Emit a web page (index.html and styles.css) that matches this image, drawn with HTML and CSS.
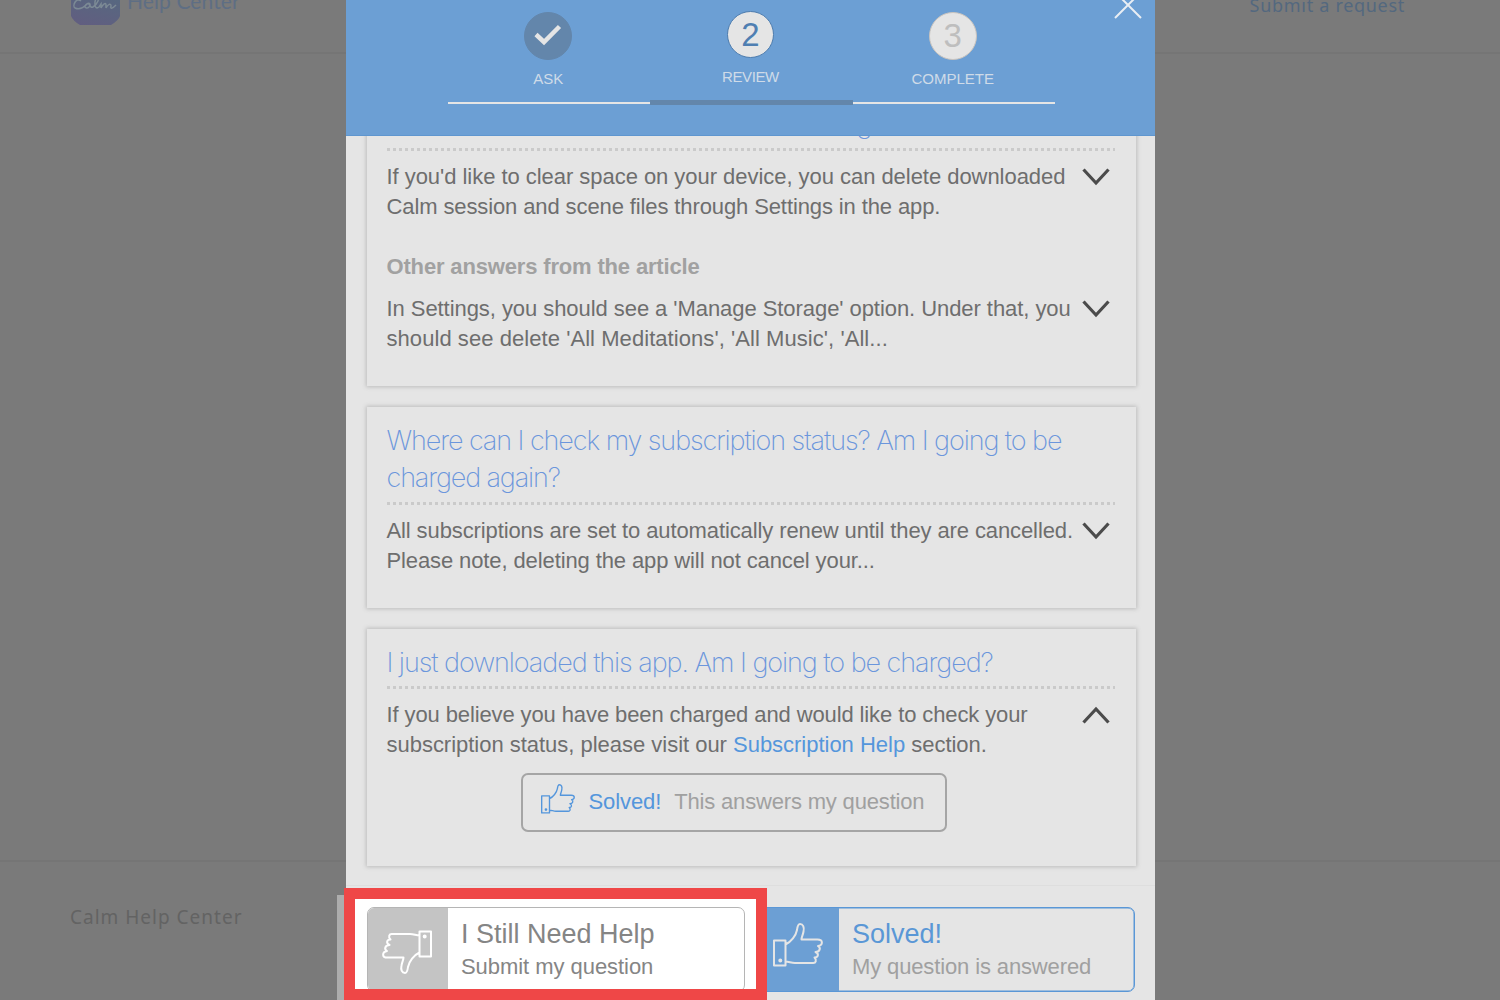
FILE: index.html
```html
<!DOCTYPE html>
<html lang="en">
<head>
<meta charset="utf-8">
<title>Calm Help Center</title>
<link rel="stylesheet" href="styles.css">
</head>
<body>
<svg class="defs" width="0" height="0" aria-hidden="true">
  <symbol id="thumb" viewBox="0 0 50 44">
    <path d="M1 17.500h11.500v25h-11.500zM12.500 21.500C18 19 23 12.500 24 7C24.500 3 25 1 27 1C30 1 31.500 4 30.500 8.500C30 12 28.500 14 28.500 16.500H44.500C50.500 16.500 50 22 45 23C48.500 25 46.500 29 42.500 29C46.500 31 45 34.500 41.500 34.500C44 37 43 40.500 39.500 40H22C18 40 16 38.500 12.500 38.500"/>
    <circle cx="7.300" cy="37.500" r="1"/>
  </symbol>
  <symbol id="chevron" viewBox="0 0 28 18"><path d="M1.500 1.500L14 15L26.500 1.500"/></symbol>
</svg>
<div class="page">
  <header class="site-header">
    <div class="brand">
      <svg class="logo" width="49" height="48" viewBox="0 0 49 48">
        <defs><linearGradient id="lg" x1="0" y1="1" x2=".3" y2="0"><stop offset="0" stop-color="#625d80"/><stop offset="1" stop-color="#536b80"/></linearGradient></defs>
        <path d="M0 9L9 0H40L49 9V39Q48 43 40 48H9Q2 44 0 39Z" fill="url(#lg)"/>
        <path d="M10 24C5 20 1 29 4 31C8 33 12 31 15 28C17 25 21 26 18 30C15 33 12 29 16 27C19 25 19 32 22 30C27 27 29 20 26 21C23 23 23 34 28 30L30 27V31C32 27 35 25 35 28V31C37 27 40 26 40 29C39 33 42 31 45 28" fill="none" stroke="#7c8a95" stroke-width="1.500"/>
      </svg>
      <span class="brand-name">Help Center</span>
    </div>
    <a class="request">Submit a request</a>
  </header>
  <main class="site-main"></main>
  <footer class="site-footer">Calm Help Center</footer>
</div>

<section class="modal">
  <header class="modal-head">
    <ol class="steps">
      <li class="step done"><span class="dot"><svg width="28" height="22" viewBox="0 0 28 22"><path d="M2 10.500L10 18L25.500 2.500"/></svg></span><span class="label">ASK</span></li>
      <li class="step active"><span class="dot">2</span><span class="label">REVIEW</span></li>
      <li class="step"><span class="dot">3</span><span class="label">COMPLETE</span></li>
    </ol>
    <svg class="close" width="28" height="28" viewBox="0 0 28 28"><path d="M1 1L27 27M27 1L1 27"/></svg>
  </header>
  <div class="answers">
    <article class="card">
      <h2 class="title clipped"><span>g</span></h2>
      <div class="dots"></div>
      <div class="row"><p><span class="t1">If you'd like to clear space on your device, you can delete downloaded</span><br><span class="t2">Calm session and scene files through Settings in the app.</span></p><svg class="chev"><use href="#chevron"/></svg></div>
      <h3 class="other">Other answers from the article</h3>
      <div class="row"><p><span class="t3">In Settings, you should see a 'Manage Storage' option. Under that, you</span><br><span class="t4">should see delete 'All Meditations', 'All Music', 'All...</span></p><svg class="chev"><use href="#chevron"/></svg></div>
    </article>
    <article class="card">
      <h2 class="title"><span class="h1">Where can I check my subscription status? Am I going to be</span><br><span class="h2">charged again?</span></h2>
      <div class="dots"></div>
      <div class="row"><p><span class="t5">All subscriptions are set to automatically renew until they are cancelled.</span><br><span class="t6">Please note, deleting the app will not cancel your...</span></p><svg class="chev"><use href="#chevron"/></svg></div>
    </article>
    <article class="card last">
      <h2 class="title"><span class="h3">I just downloaded this app. Am I going to be charged?</span></h2>
      <div class="dots"></div>
      <div class="row"><p><span class="t7">If you believe you have been charged and would like to check your</span><br><span class="t8">subscription status, please visit our <a>Subscription Help</a> section.</span></p><svg class="chev up"><use href="#chevron"/></svg></div>
      <div class="solve"><svg class="thumb small"><use href="#thumb"/></svg><span class="solve-a">Solved!</span><span class="solve-b">This answers my question</span></div>
    </article>
  </div>
  <footer class="modal-foot">
    <div class="action solved">
      <span class="tile"><svg class="thumb"><use href="#thumb"/></svg></span>
      <span class="text"><strong>Solved!</strong><em>My question is answered</em></span>
    </div>
  </footer>
</section>

<div class="edge"></div>
<div class="callout">
  <div class="action help">
    <span class="tile"><svg class="thumb down"><use href="#thumb"/></svg></span>
    <span class="text"><strong>I Still Need Help</strong><em>Submit my question</em></span>
  </div>
</div>
</body>
</html>
```
FILE: styles.css
```css
* { box-sizing: border-box; }
body { margin: 0; width: 1500px; height: 1000px; overflow: hidden; position: relative; background: #7a7a7a; font-family: "Liberation Sans", Arial, sans-serif; }
h2, h3, p, ol { margin: 0; padding: 0; font-weight: 400; }
.defs { position: absolute; }

.page { height: 1000px; display: flex; flex-direction: column; }
.site-header { height: 54px; flex: none; border-bottom: 2px solid #757575; padding: 0 95px 0 71px; display: flex; justify-content: space-between; align-items: flex-start; }
.brand { display: flex; gap: 7px; margin-top: -23px; }
.brand-name { font: 21px/30px Lato, sans-serif; color: #5e6e84; margin-top: 9px; letter-spacing: .1px; }
.request { font: 18px/24px "Noto Sans", sans-serif; color: #53687f; margin-top: -7px; letter-spacing: .7px; }
.site-main { flex: 1; }
.site-footer { height: 140px; border-top: 2px solid #757575; padding: 41px 70px; font: 19px/28px "Noto Sans", sans-serif; letter-spacing: 1px; color: #636363; }

.modal { position: absolute; left: 346px; top: 0; width: 809px; height: 1000px; background: #e5e5e5; display: flex; flex-direction: column; }
.modal-head { height: 136px; flex: none; background: #6c9fd4; border-bottom: 1px solid #5f96cf; position: relative; padding-left: 102px; }
.steps { list-style: none; display: flex; width: 607px; height: 105px; }
.step { width: 202.300px; display: flex; flex-direction: column; align-items: center; padding: 12px 2px 0 0; background: linear-gradient(#e5e5e5, #e5e5e5) 0 101.500px / 100% 2px no-repeat; }
.dot { width: 48px; height: 48px; border-radius: 50%; background: #e5e5e5; border: 1px solid #c9c4bf; color: #bebebe; font-size: 33px; line-height: 48px; text-align: center; display: flex; align-items: center; justify-content: center; }
.label { font-size: 15px; line-height: 20px; margin-top: 9px; color: #cfdbe8; }
.done .dot { background: #6386ab; border-color: #6386ab; }
.done svg { fill: none; stroke: #e5e5e5; stroke-width: 4.500; margin-top: -2px; }
.active { padding-top: 11px; background: linear-gradient(#6386ab, #6386ab) 0 100px / 100% 5px no-repeat; }
.active .dot { color: #4f7fb2; border-color: #4d7cae; height: 47px; width: 47px; }
.active .label { letter-spacing: -.4px; }
.close { position: absolute; left: 768px; top: -9px; fill: none; stroke: #e9eef4; stroke-width: 2; }

.answers { height: 749px; flex: none; overflow: hidden; padding: 0 19.500px 19px 20.500px; display: flex; flex-direction: column; justify-content: flex-end; gap: 21px; }
.card { flex: none; background: #e5e5e5; box-shadow: 0 0 4px 1px #bdbdbd; padding: 15px 21px 32px 20px; }
.last { padding-bottom: 35px; }
.title { font: 200 27px/37.500px Inter, sans-serif; color: #6b96dc; white-space: nowrap; }
.clipped { padding-left: 470px; }
.h1 { letter-spacing: -1.080px; }
.h2 { letter-spacing: -1.130px; }
.h3 { letter-spacing: -1.060px; }
.dots { height: 3px; margin: 5px 0 11px; background: repeating-linear-gradient(90deg, #cacaca 0 3px, transparent 3px 6px); }
.row { display: flex; justify-content: space-between; }
.row p { font-size: 22px; line-height: 30px; color: #6e6e6e; white-space: nowrap; width: 690px; }
.t1 { letter-spacing: -.040px; }
.t2, .t5, .t6, .t7 { letter-spacing: -.110px; }
.t3 { letter-spacing: -.060px; }
.t4 { letter-spacing: .060px; }
.t8 { letter-spacing: -.020px; }
.row a { color: #5496dc; }
.chev { width: 28px; height: 18px; margin: 6px 5px 0 0; flex: none; fill: none; stroke: #4b4b4b; stroke-width: 3.200; }
.up { transform: rotate(180deg); }
.other { font-size: 22px; line-height: 30px; font-weight: 700; color: #a1a1a1; margin: 30px 0 12px; letter-spacing: -.160px; white-space: nowrap; }
.solve { width: 426px; height: 59px; margin: 12px 0 0 134px; border: 2px solid #a5a5a5; border-radius: 7px; display: flex; align-items: center; white-space: nowrap; font-size: 22px; padding-left: 18px; position: relative; top: .5px; }
.thumb { width: 50px; height: 44px; fill: none; stroke: #e5e5e5; stroke-width: 2; stroke-linejoin: round; }
.small { width: 34px; height: 30px; stroke: #5496dc; margin-top: -6px; }
.solve-a { color: #5496dc; margin-left: 14px; letter-spacing: -.100px; }
.solve-b { color: #a0a0a0; margin-left: 13px; letter-spacing: -.170px; }

.modal-foot { flex: 1; border-top: 1px solid #dedede; padding: 21px 20px 0 412px; }
.action { height: 85px; border: 1px solid; border-radius: 7px; display: flex; overflow: hidden; white-space: nowrap; }
.tile { width: 80px; flex: none; display: flex; align-items: center; justify-content: center; }
.text { display: flex; flex-direction: column; padding: 8px 0 0 13px; }
.text strong { font-size: 27px; line-height: 36px; font-weight: 400; }
.text em { font-size: 22px; line-height: 30px; font-style: normal; letter-spacing: -.050px; }
.solved { border: 1.500px solid #5a97d6; box-shadow: inset 0 0 0 .500px #5a97d6; }
.solved .tile { background: #6c9fd4; padding: 0 3px 9px 0; }
.solved strong { color: #5a97d6; }
.solved em { color: #a0a0a0; letter-spacing: -.130px; }
.edge { position: absolute; left: 337px; top: 895px; width: 7px; height: 105px; background: #adadad; }
.callout { position: absolute; left: 344px; top: 888px; width: 423px; height: 112px; border: 11px solid #ef4747; background: #fff; padding: 8px 11px 0 12px; overflow: hidden; }
.help { border-color: #b5b5b5; color: #858585; }
.help .tile { background: #c4c4c4; padding: 4px 2px 0 0; }
.down { transform: rotate(180deg); stroke: #fff; }
```
